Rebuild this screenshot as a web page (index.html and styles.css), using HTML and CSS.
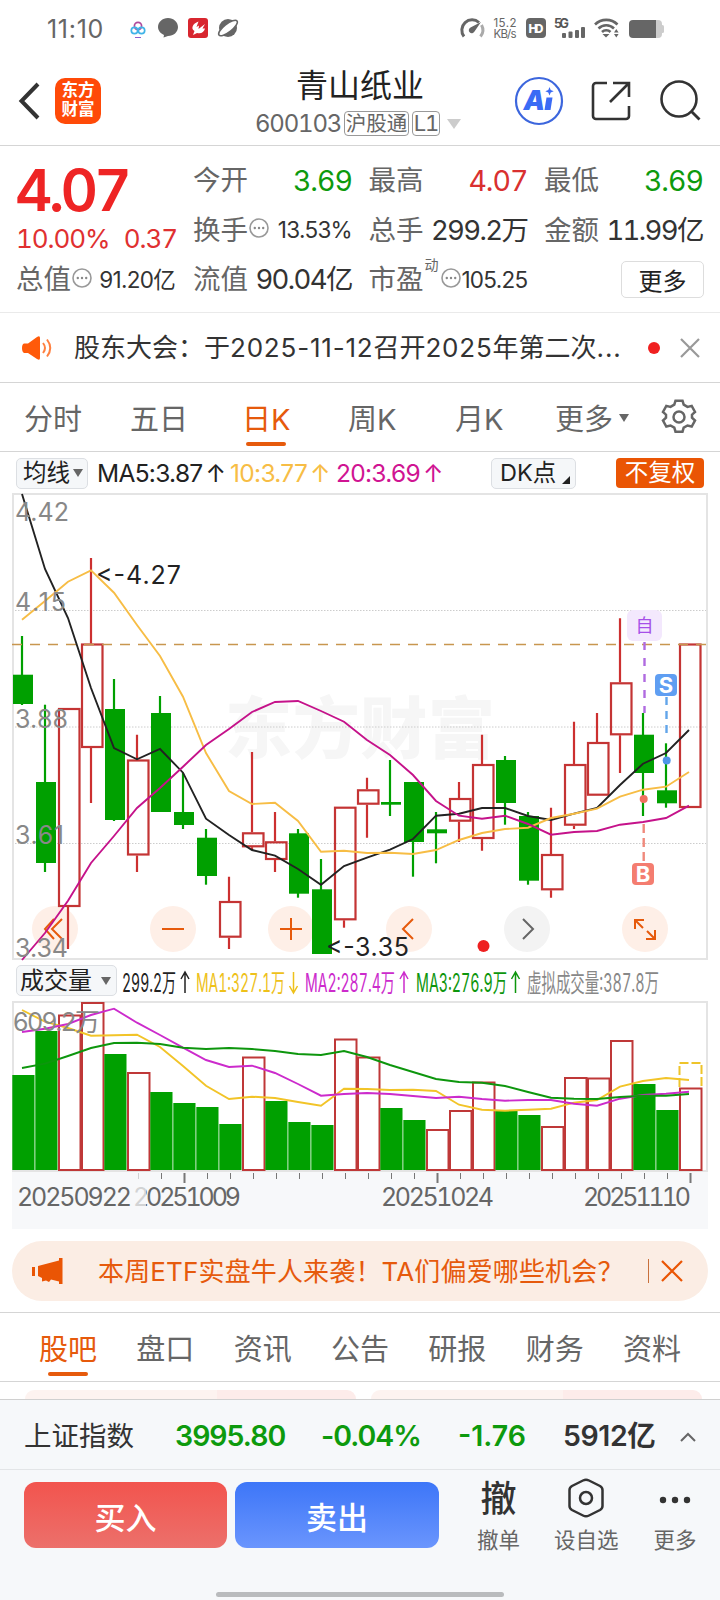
FILE: index.html
```html
<!DOCTYPE html>
<html lang="zh-CN">
<head>
    <meta charset="UTF-8">
    <meta name="viewport" content="width=device-width, initial-scale=1.0">
    <title>青山纸业 600103</title>
    <link rel="stylesheet" href="styles.css">
</head>
<body>
    <div class="status-bar">
        <span class="clock">11:10</span>
        <svg class="status-left" width="110" height="22" viewBox="130 18 110 22">
            <g fill="none" stroke-width="1.7">
                <circle cx="138" cy="26" r="3.6" stroke="#b04a9c"/>
                <circle cx="134.5" cy="30.5" r="3.2" stroke="#3fb4e8"/>
                <circle cx="141.5" cy="30.5" r="3.2" stroke="#3fb4e8"/>
                <path d="M135 37.5h6" stroke="#8a5fd0" stroke-width="1"/>
            </g>
            <path d="M168 18c5.600 0 10 4 10 9s-4.400 9-10 9l-4.500 1.500 .5-2.500c-3.500-1.600-6-4.600-6-8 0-5 4.400-9 10-9z" fill="#666"/>
            <rect x="188" y="18" width="20" height="20" rx="3" fill="#d8262f"/>
            <path d="M198.500 21.500l-2 5.500 2.500-1.500-.5 3.500 6.500-5-2.500 4.500h2.500c-1 4-4 5.500-8 4.500l-4 2 1.500-4c-4-2-2-7.500 4-9.500z" fill="#fff"/>
            <circle cx="228" cy="28" r="9" fill="#666"/>
            <ellipse cx="228" cy="28" rx="11.500" ry="4" transform="rotate(-38 228 28)" fill="#fff" stroke="#666" stroke-width="1.5"/>
        </svg>
        <svg class="status-right" width="206" height="22" viewBox="459 18 206 22">
            <g fill="none" stroke="#666" stroke-width="3">
                <path d="M464 36.500a10.300 10.300 0 0 1 15-14"/>
                <path d="M481.500 25a10.300 10.300 0 0 1-1 11.500" stroke="#aaa"/>
            </g>
            <path d="M481 22l-6.500 9.500a3 3 0 1 1-4-4z" fill="#666"/>
            <text x="493.5" y="27" class="net" textLength="23">15.2</text>
            <text x="493.5" y="38" class="net" textLength="23">KB/s</text>
            <rect x="526" y="18" width="20" height="20" rx="4" fill="#666"/>
            <text x="528.5" y="32.500" class="hd" textLength="15">HD</text>
            <text x="554" y="27.500" class="g5" textLength="15">5G</text>
            <g fill="#666">
                <rect x="562" y="33" width="4" height="5" rx="1"/>
                <rect x="568.5" y="31.500" width="4" height="6.500" rx="1"/>
                <rect x="575" y="30" width="4" height="8" rx="1"/>
                <rect x="581" y="27" width="4" height="11" rx="1"/>
            </g>
            <g fill="none" stroke="#666" stroke-width="2.6">
                <path d="M595 24.500a16 16 0 0 1 22.500 0"/>
                <path d="M598.500 28.500a11 11 0 0 1 15.500 0"/>
                <path d="M602 32a6 6 0 0 1 8.500 0"/>
            </g>
            <path d="M606 37.500l-3.500-3.500h7z M614 32.500l2.300-3.500 2.300 3.500z M614 34l2.300 3.500 2.300-3.500z" fill="#666"/>
            <rect x="650" y="20" width="12" height="18" rx="4" fill="#ccc"/>
            <rect x="661" y="25" width="3" height="8" rx="1.500" fill="#ccc"/>
            <path d="M656 20h-23a4 4 0 0 0-4 4v10a4 4 0 0 0 4 4h23z" fill="#666"/>
        </svg>
    </div>

    <header class="header">
        <div class="header-left">
            <svg width="22" height="40" viewBox="0 0 22 40"><path d="M20 3L3.500 20 20 37" fill="none" stroke="#333" stroke-width="4"/></svg>
            <div class="brand">东方<br>财富</div>
        </div>
        <div class="header-title">
            <h1>青山纸业</h1>
            <div class="code"><span>600103</span><b>沪股通</b><b class="l1">L1</b><i></i></div>
        </div>
        <svg class="header-icons" width="192" height="50" viewBox="513 76 192 50">
            <circle cx="539" cy="101" r="23" fill="#fff" stroke="#3c66dd" stroke-width="2.2"/>
            <text x="523.5" y="109.500" class="ai">A</text>
            <path d="M546.500 97.500h6l-2 12.500h-6z" fill="#3a6bf5"/>
            <path d="M549.500 87l1.200 3 3 1.200-3 1.200-1.200 3-1.200-3-3-1.200 3-1.200z" fill="#3a6bf5"/>
            <path d="M607 83h-11a3 3 0 0 0-3 3v30a3 3 0 0 0 3 3h30a3 3 0 0 0 3-3v-10M613 83h16v14M629 83l-19 19" fill="none" stroke="#333" stroke-width="2.6"/>
            <circle cx="679" cy="99" r="17.500" fill="none" stroke="#333" stroke-width="2.6"/>
            <path d="M691.500 111.500l8 8" stroke="#333" stroke-width="2.8"/>
        </svg>
    </header>

    <section class="quote">
        <div class="price-col">
            <div class="price">4.07</div>
            <div class="change"><span>10.00%</span><span>0.37</span></div>
            <div class="cell"><label>总值</label><svg class="info"><use href="#more"/></svg><span class="sm">91.20亿</span></div>
        </div>
        <div class="quote-grid">
            <div class="cell"><label>今开</label><span class="green">3.69</span></div>
            <div class="cell"><label>最高</label><span class="red">4.07</span></div>
            <div class="cell"><label>最低</label><span class="green">3.69</span></div>
            <div class="cell"><label>换手</label><svg class="info"><use href="#more"/></svg><span class="sm">13.53%</span></div>
            <div class="cell"><label>总手</label><span class="unit">299.2万</span></div>
            <div class="cell"><label>金额</label><span class="unit">11.99亿</span></div>
            <div class="cell"><label>流值</label><span class="unit">90.04亿</span></div>
            <div class="cell"><label>市盈</label><sup>动</sup><svg class="info"><use href="#more"/></svg><span class="sm">105.25</span></div>
            <div class="cell"><button class="more-button">更多</button></div>
        </div>
    </section>

    <section class="news">
        <svg width="30" height="26" viewBox="0 0 30 26"><path d="M2 8.500h4L15 2q3-2 3 1v20q0 3-3 1L6 18H2q-2-1-2-5t2-4.500z" fill="#ff5a0a"/><path d="M21 8q4 5 0 10M25 4.500q6.500 8.500 0 17" fill="none" stroke="#ff8040" stroke-width="2"/></svg>
        <p>股东大会：于<span>2025-11-12</span>召开<span>2025</span>年第二次<span>...</span></p>
        <span class="dot"></span>
        <svg width="20" height="20" viewBox="0 0 20 20"><path d="M1 1l18 18M19 1L1 19" stroke="#999" stroke-width="2.2"/></svg>
    </section>

    <nav class="tabs period-tabs">
        <span>分时</span><span>五日</span><span class="active">日K</span><span>周K</span><span>月K</span><span class="period-more">更多<i></i></span>
        <svg width="34" height="34" viewBox="-17 -17 34 34" fill="none" stroke="#666" stroke-width="2.5">
            <path d="M-3.500-15.500h7l1.200 4 3.800 2.200 4.200-1 3.300 6-3 2.800v3l3 2.800-3.300 6-4.200-1-3.800 2.200-1.200 4h-7l-1.200-4-3.800-2.200-4.200 1-3.300-6 3-2.800v-3l-3-2.800 3.300-6 4.200 1 3.800-2.200z" transform="translate(0 -.8)"/>
            <circle r="5.500"/>
        </svg>
    </nav>

    <div class="ma-row">
        <span class="chip">均线<i></i></span>
        <span class="ma ma5">MA5:3.87<em>↑</em></span>
        <span class="ma ma10">10:3.77<em>↑</em></span>
        <span class="ma ma20">20:3.69<em>↑</em></span>
        <span class="chip dk">DK点<i></i></span>
        <span class="adjust">不复权</span>
    </div>

    <!-- K line -->
    <svg class="chart" width="696" height="467" viewBox="12 493 696 467">
        <text x="225" y="753" class="watermark" textLength="270">东方财富</text>
        <path d="M12 610.500h695M12 727h695M12 843.500h695" stroke="#ccc" stroke-dasharray="1.5 1.5"/>
        <rect x="13" y="494" width="694" height="465" fill="none" stroke="#e4e4e4" stroke-width="2"/>
        <g id="controls">
            <circle cx="55" cy="929" r="23"/><circle cx="173" cy="929" r="23"/><circle cx="291" cy="929" r="23"/>
            <circle cx="409" cy="929" r="23"/><circle cx="527" cy="929" r="23" class="off"/><circle cx="645" cy="929" r="23"/>
        </g>
        <g id="candles"></g>
        <path d="M12 644.500h695" stroke="#c8964f" stroke-dasharray="10 8" stroke-width="1.3"/>
        <g fill="none" stroke="#e65a0c" stroke-width="2">
            <path d="M54 919l-9 10 9 10M62 919l-10 10 10 10"/>
            <path d="M162 929h22M280 929h22M291 918v22"/>
            <path d="M413 919l-10 10 10 10"/>
            <path d="M523 919l10 10-10 10" stroke="#666"/>
            <path d="M635 929v-9h9M635 920l8 8M655 930v9h-9M655 939l-8-8"/>
        </g>
        <g id="lines"></g>
        <g class="axis">
            <text x="15" y="521" textLength="54">4.42</text>
            <text x="15" y="611" textLength="51">4.15</text>
            <text x="15" y="728" textLength="53">3.88</text>
            <text x="15" y="844" textLength="49">3.61</text>
            <text x="15" y="957" textLength="53">3.34</text>
        </g>
        <text x="96" y="584" class="peak" textLength="85">&lt;-4.27</text>
        <text x="326" y="955.5" class="peak" textLength="83">&lt;-3.35</text>
        <circle cx="483.5" cy="946" r="6" fill="#ee2020"/>
        <rect x="627" y="610" width="35" height="31" rx="6" fill="#f3e8fd"/>
        <text x="644.5" y="632" class="self">自</text>
        <g stroke-width="2.4">
            <path d="M644.500 642v71" stroke="#b06be0" stroke-dasharray="8 8"/>
            <path d="M666.500 697v38" stroke="#62a5ea" stroke-dasharray="8 6"/>
            <path d="M643.700 824v38" stroke="#f0897c" stroke-dasharray="9 5"/>
        </g>
        <rect x="655" y="674" width="22" height="22" rx="4" fill="#5f9ef2"/>
        <text x="666" y="693" class="mark">S</text>
        <rect x="632" y="863" width="22" height="22" rx="4" fill="#f47d70"/>
        <text x="643" y="882" class="mark">B</text>
        <circle cx="666.7" cy="760.5" r="4" fill="#4f95e8"/>
        <circle cx="643.7" cy="799" r="4" fill="#f0705f"/>
    </svg>

    <div class="vol-row">
        <span class="chip">成交量<i></i></span>
        <svg width="540" height="34" viewBox="122 964 540 34">
            <g class="vol-text">
                <text x="122" y="991.5" fill="#222" textLength="54" lengthAdjust="spacingAndGlyphs">299.2万</text>
                <text x="196" y="991.5" fill="#eec11a" textLength="89" lengthAdjust="spacingAndGlyphs">MA1:327.1万</text>
                <text x="305" y="991.5" fill="#cc2bcc" textLength="90" lengthAdjust="spacingAndGlyphs">MA2:287.4万</text>
                <text x="416" y="991.5" fill="#0d960d" textLength="91" lengthAdjust="spacingAndGlyphs">MA3:276.9万</text>
                <text x="527" y="991.5" fill="#888" textLength="132" lengthAdjust="spacingAndGlyphs">虚拟成交量:387.8万</text>
            </g>
            <g fill="none" stroke-width="1.5">
                <path d="M185 993v-20M181 979l4-7 4 7" stroke="#222"/>
                <path d="M293.500 972v20M289.500 986l4 7 4-7" stroke="#eec11a"/>
                <path d="M404 993v-20M400 979l4-7 4 7" stroke="#cc2bcc"/>
                <path d="M515.500 993v-20M511.500 979l4-7 4 7" stroke="#0d960d"/>
            </g>
        </svg>
    </div>

    <!-- Volume and dates -->
    <svg class="volume" width="696" height="228" viewBox="12 1001 696 228">
        <rect x="12" y="1171" width="696" height="58" fill="#f7f8fa"/>
        <rect x="13" y="1002" width="694" height="169" fill="#fff" stroke="#e4e4e4" stroke-width="2"/>
        <g id="bars"></g>
        <path d="M679.500 1087v-24h22v24" fill="none" stroke="#eec42a" stroke-width="2" stroke-dasharray="9 3"/>
        <g id="vlines"></g>
        <text x="13" y="1031" class="axis" textLength="87">609.2万</text>
        <g id="ticks"></g>
        <g class="date">
            <text x="17" y="1206" textLength="115">20250922</text>
            <text x="133" y="1206" textLength="108">20251009</text>
            <rect x="132" y="1186" width="14" height="24" fill="#f7f8fa" opacity=".75"/>
            <text x="381" y="1206" textLength="113">20251024</text>
            <text x="583" y="1206" textLength="108">20251110</text>
        </g>
    </svg>

    <section class="promo">
        <svg width="31" height="27" viewBox="0 0 31 27" fill="#ea5504"><path d="M0 9h3v9H0zM6 8L27 2.500V0h3.500v26H27v-2.500l-8-2-2 2.500-3-1.500-4 1V20l-4-2z"/></svg>
        <p>本周ETF实盘牛人来袭！TA们偏爱哪些机会？</p>
        <i></i>
        <svg width="22" height="22" viewBox="0 0 22 22"><path d="M1 1l20 20M21 1L1 21" stroke="#ea5504" stroke-width="2.2"/></svg>
    </section>

    <nav class="tabs info-tabs">
        <span class="active">股吧</span><span>盘口</span><span>资讯</span><span>公告</span><span>研报</span><span>财务</span><span>资料</span>
    </nav>
    <div class="peek"><div></div><div></div></div>

    <footer>
        <div class="index-bar">
            <span class="name">上证指数</span>
            <b class="green">3995.80</b>
            <b class="green">-0.04%</b>
            <b class="green">-1.76</b>
            <b>5912亿</b>
            <svg width="16" height="10" viewBox="0 0 16 10"><path d="M1 9l7-7 7 7" fill="none" stroke="#666" stroke-width="2"/></svg>
        </div>
        <div class="actions">
            <button class="buy">买入</button>
            <button class="sell">卖出</button>
            <div class="tool cancel"><strong>撤</strong><span>撤单</span></div>
            <div class="tool set">
                <svg width="36" height="40" viewBox="0 0 36 40" fill="none" stroke="#333" stroke-width="2.5"><path d="M15 2.500q3-1.500 6 0L32 8q2.500 1.500 2.500 4v16q0 2.500-2.500 4l-11 5.500q-3 1.500-6 0L4 32q-2.500-1.500-2.500-4V12q0-2.500 2.500-4z"/><circle cx="18" cy="20" r="6"/></svg>
                <span>设自选</span>
            </div>
            <div class="tool etc">
                <svg width="32" height="40" viewBox="0 0 32 40" fill="#333"><circle cx="4" cy="22" r="3.2"/><circle cx="16" cy="22" r="3.2"/><circle cx="28" cy="22" r="3.2"/></svg>
                <span>更多</span>
            </div>
        </div>
        <div class="home-bar"></div>
    </footer>

    <svg width="0" height="0" class="defs">
        <symbol id="more" viewBox="0 0 20 20">
            <circle cx="10" cy="10" r="9" fill="none" stroke="#999" stroke-width="1.6"/>
            <circle cx="5.8" cy="10" r="1.200" fill="#888"/><circle cx="10" cy="10" r="1.200" fill="#888"/><circle cx="14.2" cy="10" r="1.200" fill="#888"/>
        </symbol>
    </svg>

    <script>
        // [up, high, body top, body bottom, low]
        const candles = [
            [0, 636, 674.7, 704, 705], [0, 704.7, 782, 863, 872], [1, 708, 708, 907, 949],
            [1, 558, 643.5, 748, 803], [0, 679, 709, 820, 821], [1, 734.7, 759.5, 855.5, 872],
            [0, 696, 713, 812, 812], [0, 772.7, 812, 825, 829], [0, 829, 837.7, 876, 884.7],
            [1, 876.7, 901, 937.7, 949], [1, 752, 832.3, 847.3, 850], [1, 812, 841.3, 860, 872],
            [0, 829, 833.3, 893.7, 897.7], [0, 859, 889.3, 954, 954], [1, 806.7, 806.7, 920.3, 927.7],
            [1, 777.7, 789.3, 804.7, 837.7], [0, 760, 802, 804.7, 816], [0, 782, 782, 842, 876.7],
            [0, 812, 829.3, 833.3, 863.3], [1, 782, 798, 821.7, 842], [1, 734.7, 764, 839, 850.7],
            [0, 756, 760, 803, 824.7], [0, 812, 816, 880.7, 884.7], [1, 807.7, 854, 890.3, 897.7],
            [1, 721.7, 764, 825.7, 829], [1, 713, 742, 795.7, 795.7], [1, 618.3, 682.3, 735.3, 773],
            [0, 713, 734.7, 773, 816], [0, 743.3, 790.3, 803.3, 807.7], [1, 643.5, 643.5, 808, 808]
        ];

        const averages = {
            '#222222': [494, 569, 618, 688, 748, 759.3, 749, 772.7, 818.7, 835, 850, 855.7, 869, 884.7, 866, 857.7, 849.7, 839, 815.7, 813.7, 808, 808, 816, 820, 813.7, 808, 785, 763.7, 753, 730],
            '#f7bd45': [619.7, 601, 581.7, 570.3, 592.7, 625, 656, 696.7, 753, 791, 804, 802.7, 821, 851.7, 850.7, 853, 852.7, 854, 850, 840, 833, 829, 827.7, 818, 813.7, 808.7, 796.7, 789.7, 786.7, 772],
            '#c5128a': [960, 933, 900.7, 863, 836, 808, 788, 766.7, 745, 729, 712, 702, 701, 711, 721.7, 740, 755, 775, 801, 815.7, 818.7, 815.7, 824, 834.7, 832, 831, 824.7, 822, 818, 805.7]
        };

        // negative = falling day
        const volumes = [-1075, -1031, 1014.5, 1002, -1054, 1072, -1092, -1103, -1107, -1124, 1056.5, -1101, -1122, -1125, 1038.5, 1056.5, -1108, -1120, 1129, 1110, 1081.5, -1111, -1115, 1126, 1077, 1077.5, 1040, -1084, -1110, 1087.5];

        const volumeAverages = {
            '#f2c428': [1010, 1021.7, 1028, 1035.7, 1035.3, 1034.7, 1047, 1066, 1085.7, 1099, 1096.7, 1098, 1102, 1105.7, 1088.7, 1089, 1090, 1089.7, 1091, 1104.7, 1109.7, 1110.7, 1109.7, 1108.7, 1102.7, 1100, 1086.7, 1081, 1078, 1080],
            '#cc2bcc': [1032, 1028.7, 1024, 1015, 1008.7, 1022.7, 1035, 1047.7, 1060, 1067, 1065.7, 1073, 1084, 1095.7, 1094, 1093, 1094, 1096, 1098, 1096.7, 1099, 1100.7, 1100, 1100, 1103.7, 1105.7, 1098.7, 1095, 1093.7, 1091.7],
            '#0d960d': [1068, 1063.7, 1056, 1048, 1043, 1042.7, 1044, 1047.7, 1049, 1048, 1049, 1051, 1054, 1055, 1051, 1057, 1065, 1072, 1079, 1082, 1082.7, 1086, 1092, 1097.7, 1098.7, 1099, 1097, 1095.7, 1095.7, 1094]
        };

        const xAt = i => 22 + i * 23;

        function drawLines(id, series) {
            document.getElementById(id).innerHTML = Object.entries(series).map(([color, ys]) =>
                `<polyline fill="none" stroke="${color}" stroke-width="1.9" points="${ys.map((y, i) => xAt(i) + ',' + y).join(' ')}"/>`
            ).join('');
        }

        document.getElementById('candles').innerHTML = candles.map(([up, high, top, bottom, low], i) => {
            const x = xAt(i);
            if (up) {
                return `<path d="M${x} ${high}V${top}M${x} ${bottom}V${low}" stroke="#cc3030" stroke-width="2.2"/>` +
                    `<rect x="${x - 9}" y="${top + 1}" width="20.5" height="${bottom - top - 2}" fill="none" stroke="#c43434" stroke-width="2.2"/>`;
            }
            return `<path d="M${x} ${high}V${low}" stroke="#00a000" stroke-width="2.2"/>` +
                `<rect x="${x - 9}" y="${top}" width="20" height="${bottom - top}" fill="#00a000"/>`;
        }).join('');

        document.getElementById('bars').innerHTML = volumes.map((v, i) => {
            const x = xAt(i), y = Math.abs(v);
            if (v > 0) {
                return `<rect x="${x - 9}" y="${y + 1}" width="21.5" height="${1169 - y}" fill="#fff" stroke="#bf3838" stroke-width="2"/>`;
            }
            return `<rect x="${x - 9.7}" y="${y}" width="22.2" height="${1170 - y}" fill="#00a000"/>`;
        }).join('');

        let ticks = '';
        for (let i = 5; i < 30; i++) {
            const big = i % 11 === 7;
            ticks += `<path d="M${xAt(i) + 1.5} 1173v${big ? 10 : 6}" stroke="#777" stroke-width="${big ? 2 : 1}" opacity="${i === 5 ? 0.3 : 1}"/>`;
        }
        document.getElementById('ticks').innerHTML = ticks;

        drawLines('lines', averages);
        drawLines('vlines', volumeAverages);
    </script>
</body>
</html>
```
FILE: styles.css
```css
* {
    box-sizing: border-box;
}

body {
    margin: 0;
    width: 720px;
    height: 1600px;
    overflow: hidden;
    display: flex;
    flex-direction: column;
    background-color: #fff;
    color: #333;
    font-family: Inter, "Noto Sans CJK SC", sans-serif;
    line-height: 1;
    white-space: nowrap;
}

h1, p {
    margin: 0;
    font-weight: 400;
}

svg {
    display: block;
    flex: none;
    overflow: visible;
}

button {
    border: none;
    padding: 0;
    font-family: inherit;
}

.green {
    color: #0d9a0d;
}

.red {
    color: #d93030;
}

.defs {
    position: absolute;
}

.status-bar {
    height: 58px;
    display: flex;
    align-items: center;
    padding: 0 55px 0 47px;
}

.clock {
    width: 83px;
    font-size: 25px;
    letter-spacing: 0.7px;
    color: #666;
}

.status-right {
    margin-left: auto;
}

.net {
    font-size: 11.5px;
    fill: #666;
}

.hd {
    font-size: 12px;
    font-weight: 800;
    fill: #fff;
}

.g5 {
    font-size: 12.5px;
    font-weight: 700;
    fill: #555;
}

/* Header */
.header {
    height: 88px;
    display: grid;
    grid-template-columns: 256px 1fr 207px;
    border-bottom: 1px solid #d5d5d5;
}

.header-left {
    display: flex;
    align-items: center;
    gap: 15px;
    padding: 0 0 1px 18px;
}

.brand {
    width: 46px;
    height: 46px;
    border-radius: 10px;
    background-color: #ff4a08;
    color: #fff;
    font-size: 16.5px;
    font-weight: 700;
    line-height: 19px;
    padding-top: 3px;
    text-align: center;
}

.header-title h1 {
    margin: 11px 0 8px 40px;
    font-size: 32px;
    line-height: 34px;
    color: #222;
}

.code {
    display: flex;
    align-items: center;
    font-size: 24px;
    font-variant-numeric: tabular-nums;
    color: #666;
}

.code span {
    width: 89px;
    margin-left: -1px;
    letter-spacing: -1.2px;
}

.code b {
    width: 65px;
    height: 25px;
    margin-right: 3px;
    border: 1px solid #999;
    border-radius: 4px;
    font-size: 20.5px;
    font-weight: 400;
    line-height: 23px;
    text-align: center;
}

.code .l1 {
    width: 28px;
    font-size: 22px;
    letter-spacing: -1px;
}

.code i {
    margin-left: 4px;
    border: 7.5px solid transparent;
    border-top: 10px solid #ccc;
    border-bottom: 0;
}

.header-icons {
    margin-top: 18px;
}

.ai {
    font-size: 27px;
    font-weight: 900;
    font-style: italic;
    fill: #3a6bf5;
}

/* Quote */
.quote {
    height: 167px;
    display: flex;
    padding: 10px 17px 0 16px;
    border-bottom: 1px solid #eaeaea;
    font-variant-numeric: tabular-nums;
}

.price-col {
    width: 177px;
    padding-right: 18px;
}

.price {
    height: 66px;
    margin-left: -1px;
    padding-top: 5px;
    font-size: 58px;
    font-weight: 600;
    letter-spacing: -3.8px;
    color: #ee2424;
}

.change {
    height: 33px;
    margin-right: -2px;
    display: flex;
    justify-content: space-between;
    font-size: 26px;
    line-height: 33px;
    letter-spacing: -1.1px;
    color: #e03030;
}

.quote-grid {
    flex: 1;
    display: grid;
    grid-template-columns: 159px 159px 159px;
    grid-auto-rows: 49.5px;
    column-gap: 16.5px;
}

.cell {
    height: 50px;
    display: flex;
    align-items: center;
    position: relative;
}

.cell label {
    font-size: 27.5px;
    color: #666;
}

.cell span {
    margin-left: auto;
    font-size: 28.5px;
    letter-spacing: -1px;
}

.cell .unit {
    font-size: 27.5px;
    letter-spacing: -1.6px;
}

.cell .sm {
    font-size: 22.5px;
    font-variant-numeric: normal;
    letter-spacing: -0.7px;
}

.info {
    width: 20px;
    height: 20px;
    margin: -5px 0 0 1px;
}

.cell sup {
    margin: -30px 0 0 1px;
    width: 15px;
    font-size: 14px;
    color: #666;
}

.more-button {
    width: 83px;
    height: 37px;
    margin: -2px -1px 0 auto;
    border: 1px solid #ddd;
    border-radius: 5px;
    background-color: #fff;
    font-size: 24px;
    color: #222;
}

/* News */
.news {
    height: 70px;
    display: flex;
    align-items: center;
    padding: 0 19px 0 22px;
    border-bottom: 1px solid #d5d5d5;
}

.news p {
    margin-left: 22px;
    width: 574px;
    font-size: 26px;
}

.news p span {
    letter-spacing: 0.8px;
}

.dot {
    width: 12px;
    height: 12px;
    border-radius: 50%;
    margin-right: 20px;
    background-color: #f02020;
}

/* Tabs */
.tabs {
    display: flex;
    color: #666;
    border-bottom: 1px solid #d5d5d5;
}

.tabs span {
    position: relative;
    font-size: 29px;
}

.tabs .active {
    color: #e65a0c;
}

.tabs .active::after {
    content: "";
    position: absolute;
    left: calc(50% - 20px);
    bottom: 5px;
    width: 40px;
    height: 4px;
    border-radius: 2px;
    background-color: #e65a0c;
}

.period-tabs {
    height: 69px;
    display: grid;
    grid-template-columns: 106px 112px 106px 107px 100px 107px 34px;
    padding-left: 24px;
    line-height: 72px;
    align-items: center;
}

.period-tabs span {
    padding-top: 1px;
    justify-self: start;
}

.period-tabs svg {
    margin-bottom: 5px;
}

.period-tabs .active::after {
    bottom: 10px;
}

.period-more i {
    display: inline-block;
    margin-left: 6px;
    vertical-align: 8px;
    border: 5px solid transparent;
    border-top: 8px solid #666;
    border-bottom: 0;
}

/* MA legend */
.ma-row {
    height: 41px;
    display: flex;
    align-items: center;
    padding: 1px 16px 0;
}

.chip {
    height: 31px;
    display: flex;
    align-items: center;
    padding: 0 4px 0 6px;
    border: 1px solid #dcdfe3;
    border-radius: 5px;
    background-color: #f5f7f9;
    font-size: 23.5px;
    color: #222;
}

.chip i {
    margin-left: 3px;
    border: 5px solid transparent;
    border-top: 8px solid #666;
    border-bottom: 0;
}

.ma {
    display: flex;
    padding-top: 1px;
    font-size: 24.5px;
    letter-spacing: -0.7px;
}

.ma em {
    font-style: normal;
    width: 20px;
    margin-left: 3px;
}

.ma5 {
    width: 133px;
    margin-left: 9px;
    color: #222;
}

.ma10 {
    width: 106px;
    color: #f7bd45;
}

.ma20 {
    color: #d01492;
}

.dk {
    width: 85px;
    margin-left: auto;
    padding-left: 8px;
}

.dk i {
    margin: 14px 0 0 6px;
    border: 0;
    border-left: 8px solid transparent;
    border-bottom: 8px solid #222;
}

.adjust {
    width: 88px;
    height: 30px;
    margin-left: 40px;
    border-radius: 4px;
    background-color: #ea5504;
    color: #fff;
    font-size: 23.5px;
    line-height: 29px;
    text-align: center;
}

/* Charts */
.chart, .volume {
    margin-left: 12px;
    font-size: 25px;
}

.watermark {
    font-size: 67px;
    font-weight: 900;
    fill: #f6f6f6;
}

.axis {
    fill: #888;
}

.peak {
    fill: #222;
}

.self {
    font-size: 18px;
    text-anchor: middle;
    fill: #a64fe8;
}

.mark {
    font-size: 22px;
    font-weight: 700;
    text-anchor: middle;
    fill: #fff;
}

#controls {
    fill: #feefe7;
}

#controls .off {
    fill: #f3f3f3;
}

.vol-row {
    height: 41px;
    display: flex;
    align-items: center;
    padding-left: 16px;
    gap: 5px;
}

.vol-row .chip {
    width: 101px;
    padding-left: 3px;
    font-size: 24px;
}

.vol-row .chip i {
    margin-left: 9px;
}

.vol-text {
    font-size: 25px;
    font-variant-numeric: tabular-nums;
}

.date {
    font-variant-numeric: tabular-nums;
    fill: #666;
}

/* Promo */
.promo {
    width: 696px;
    height: 60px;
    margin: 12px 12px 11px;
    display: flex;
    align-items: center;
    padding: 0 25px 0 20px;
    border-radius: 30px;
    background-color: #fbede4;
    color: #e65a0c;
}

.promo p {
    margin-left: 35px;
    width: 551px;
    padding-top: 1px;
    font-size: 26px;
    letter-spacing: 0.15px;
}

.promo i {
    width: 1px;
    height: 24px;
    margin-right: 12px;
    background-color: #c8703c;
}

.info-tabs {
    height: 70px;
    padding: 1px 39px 0;
    border-top: 1px solid #d5d5d5;
    line-height: 72px;
    justify-content: space-between;
}

.peek {
    height: 17px;
    display: flex;
    gap: 15px;
    padding: 8px 18px 0 25px;
}

.peek div {
    flex: 1;
    border-radius: 14px 14px 0 0;
    background: linear-gradient(to right, #fdf3f0 58%, #fdecea 58%);
}

/* Bottom bar */
footer {
    flex: 1;
    background-color: #f6f8fa;
    border-top: 1px solid #d0d0d0;
}

.index-bar {
    height: 70px;
    display: flex;
    align-items: center;
    padding: 4px 24px 0 24px;
    border-bottom: 1px solid #e3e5e7;
}

.index-bar .name {
    width: 151px;
    font-size: 27.5px;
}

.index-bar b {
    font-size: 28.5px;
    font-weight: 600;
    letter-spacing: -1px;
    width: 146px;
}

.index-bar b:nth-child(3) {
    width: 137px;
}

.index-bar b:nth-child(4) {
    width: 105px;
    letter-spacing: 0;
}

.index-bar b:nth-child(5) {
    width: 117px;
    letter-spacing: -0.4px;
}

.actions {
    height: 122px;
    display: flex;
    padding: 12px 22px 0 24px;
}

.actions button {
    width: 203px;
    height: 66px;
    margin-right: 8px;
    border-radius: 12px;
    color: #fff;
    font-size: 31px;
    font-weight: 500;
}

.buy {
    background: linear-gradient(#f2544e, #ec706b);
}

.actions .sell {
    width: 204px;
    background: linear-gradient(#3d76f8, #6a95fd);
}

.tool {
    display: flex;
    flex-direction: column;
    align-items: center;
    margin-top: -4px;
    font-size: 21.5px;
    color: #666;
}

.tool strong, .tool svg {
    height: 40px;
    margin-bottom: 12px;
    font-size: 36px;
    font-weight: 500;
    line-height: 43px;
    color: #333;
}

.cancel {
    margin-left: 30px;
}

.set {
    margin-left: 34px;
}

.etc {
    margin-left: 35px;
}

.home-bar {
    width: 288px;
    height: 5px;
    margin: 0 auto;
    border-radius: 3px;
    background-color: #b9bbbd;
}
```
